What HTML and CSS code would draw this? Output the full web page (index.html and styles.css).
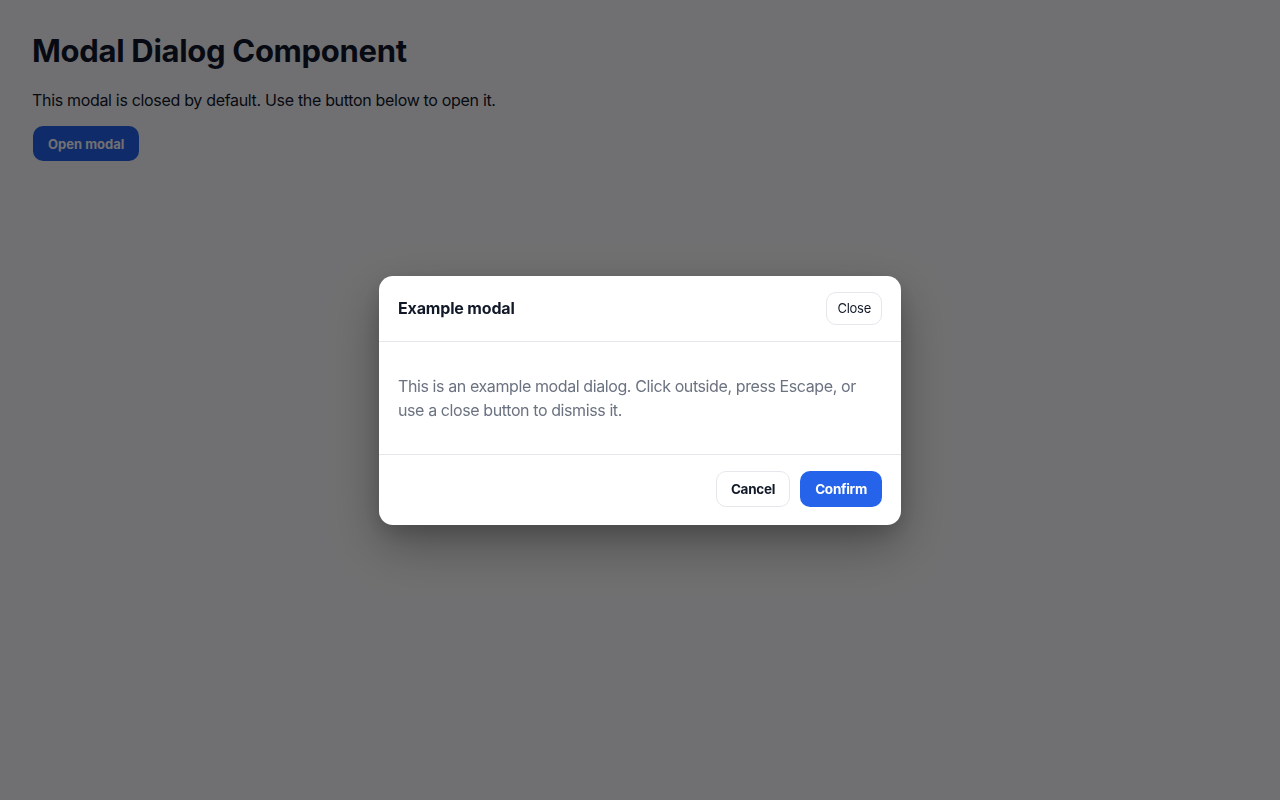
FILE: index.html
```html
<!DOCTYPE html>
<html lang="en">
<head>
<meta charset="utf-8">
<title>Modal Dialog Component</title>
<link rel="stylesheet" href="styles.css">
</head>
<body>
<main class="page">
  <h1 class="page-title">Modal Dialog Component</h1>
  <p class="page-text">This modal is closed by default. Use the button below to open it.</p>
  <button class="btn btn-primary open-btn" type="button">Open modal</button>
</main>
<div class="overlay">
  <div class="modal" role="dialog" aria-modal="true" aria-labelledby="modal-title">
    <header class="modal-header">
      <h2 class="modal-title" id="modal-title">Example modal</h2>
      <button class="btn btn-close" type="button">Close</button>
    </header>
    <div class="modal-body">
      <p>This is an example modal dialog. Click outside, press Escape, or use a close button to dismiss it.</p>
    </div>
    <footer class="modal-footer">
      <button class="btn btn-secondary" type="button">Cancel</button>
      <button class="btn btn-primary" type="button">Confirm</button>
    </footer>
  </div>
</div>
</body>
</html>
```

FILE: styles.css
```css
* { box-sizing: border-box; }
html, body { margin: 0; height: 100%; }
body {
  font-family: Inter, "Noto Sans", sans-serif;
  color: #111827;
  background: #ffffff;
}
.page {
  padding: 32px;
}
.page-title {
  margin: 0 0 18px;
  font-size: 31px;
  line-height: 38px;
  font-weight: 700;
  letter-spacing: -0.01em;
}
.page-text {
  margin: 0 0 14px;
  font-size: 16px;
  line-height: 24px;
  letter-spacing: -0.02em;
}
.btn {
  font-family: inherit;
  font-size: 13.5px;
  font-weight: 700;
  letter-spacing: -0.02em;
  border-radius: 10px;
  cursor: pointer;
  border: 1px solid transparent;
  padding: 0 14px;
  height: 36px;
}
.btn-primary {
  background: #2563eb;
  color: #ffffff;
}
.open-btn {
  margin-left: 1px;
  height: 35px;
  padding: 0 14px;
  font-size: 13px;
  letter-spacing: 0;
}
.btn-secondary {
  background: #ffffff;
  color: #111827;
  border-color: #e5e7eb;
}
.btn-close {
  background: #ffffff;
  color: #111827;
  border-color: #e5e7eb;
  font-weight: 400;
  font-size: 13px;
  height: 33px;
  padding: 0 10px;
}
.overlay {
  position: fixed;
  inset: 0;
  background: rgba(0, 0, 4, 0.56);
  display: flex;
  align-items: center;
  justify-content: center;
}
.modal {
  width: 522px;
  background: #ffffff;
  border-radius: 14px;
  box-shadow: 0 20px 50px rgba(0, 0, 0, 0.3), 0 8px 20px rgba(0, 0, 0, 0.15);
  overflow: hidden;
}
.modal-header {
  display: flex;
  align-items: center;
  justify-content: space-between;
  padding: 16px 19px;
  border-bottom: 1px solid #e5e7eb;
}
.modal-title {
  margin: 0;
  font-size: 16px;
  line-height: 24px;
  font-weight: 700;
  letter-spacing: -0.01em;
  color: #111827;
}
.modal-body {
  padding: 32px 19px;
}
.modal-body p {
  margin: 0;
  font-size: 16px;
  line-height: 24px;
  letter-spacing: -0.025em;
  color: #6b7280;
}
.modal-footer {
  display: flex;
  justify-content: flex-end;
  gap: 10px;
  padding: 16px 19px 18px;
  border-top: 1px solid #e5e7eb;
}
```
